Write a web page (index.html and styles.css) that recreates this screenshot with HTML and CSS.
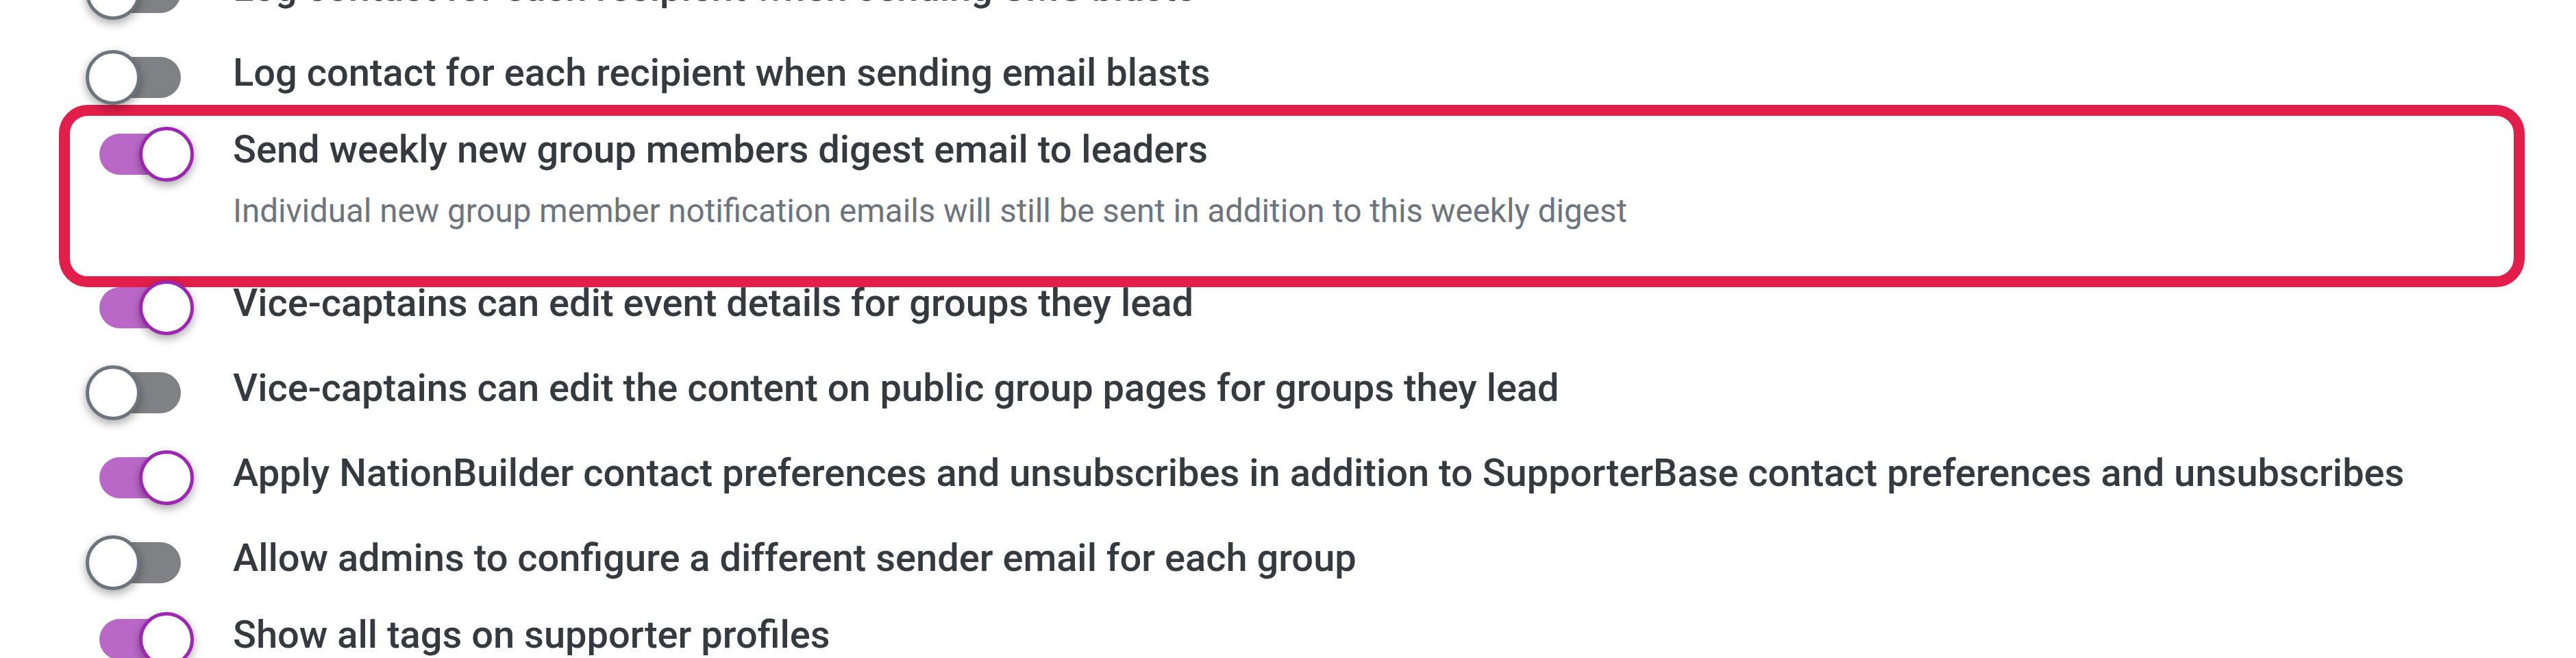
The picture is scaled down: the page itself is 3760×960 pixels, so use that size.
FILE: index.html
```html
<!DOCTYPE html>
<html lang="en">
<head>
  <meta charset="UTF-8"/>
  <meta name="viewport" content="width=device-width, initial-scale=1.0"/>
  <title>Group settings</title>
  <link rel="stylesheet" href="styles.css">
</head>
<body>

  <div class="settings">

    <div class="setting">
      <span class="switch"><span class="switch-track"></span><span class="switch-thumb"></span></span>
      <div class="setting-text">
        <div class="setting-label">Log contact for each recipient when sending SMS blasts</div>
      </div>
    </div>

    <div class="setting">
      <span class="switch"><span class="switch-track"></span><span class="switch-thumb"></span></span>
      <div class="setting-text">
        <div class="setting-label">Log contact for each recipient when sending email blasts</div>
      </div>
    </div>

    <div class="setting setting--tight setting--flagged">
      <span class="switch is-on"><span class="switch-track"></span><span class="switch-thumb"></span></span>
      <div class="setting-text">
        <div class="setting-label">Send weekly new group members digest email to leaders</div>
        <div class="setting-desc">Individual new group member notification emails will still be sent in addition to this weekly digest</div>
      </div>
    </div>

    <div class="setting">
      <span class="switch is-on"><span class="switch-track"></span><span class="switch-thumb"></span></span>
      <div class="setting-text">
        <div class="setting-label">Vice-captains can edit event details for groups they lead</div>
      </div>
    </div>

    <div class="setting">
      <span class="switch"><span class="switch-track"></span><span class="switch-thumb"></span></span>
      <div class="setting-text">
        <div class="setting-label">Vice-captains can edit the content on public group pages for groups they lead</div>
      </div>
    </div>

    <div class="setting">
      <span class="switch is-on"><span class="switch-track"></span><span class="switch-thumb"></span></span>
      <div class="setting-text">
        <div class="setting-label">Apply NationBuilder contact preferences and unsubscribes in addition to SupporterBase contact preferences and unsubscribes</div>
      </div>
    </div>

    <div class="setting">
      <span class="switch"><span class="switch-track"></span><span class="switch-thumb"></span></span>
      <div class="setting-text">
        <div class="setting-label">Allow admins to configure a different sender email for each group</div>
      </div>
    </div>

    <div class="setting setting--tight">
      <span class="switch is-on"><span class="switch-track"></span><span class="switch-thumb"></span></span>
      <div class="setting-text">
        <div class="setting-label">Show all tags on supporter profiles</div>
      </div>
    </div>

  </div>

</body>
</html>
```

FILE: styles.css
```css
* {
  box-sizing: border-box;
  margin: 0;
  padding: 0;
}

body {
  font-family: Roboto, 'Liberation Sans', sans-serif;
  background: #fff;
  color: #343a40;
  height: 100vh;
  overflow: hidden;
}

.settings {
  display: flex;
  flex-direction: column;
  gap: 44px;
  margin-top: -51px;
  padding: 0 75px 0 125px;
}

.setting {
  display: flex;
  align-items: flex-start;
  gap: 57px;
  position: relative;
}

.setting--tight {
  margin-top: -12px;
}

/* Red frame drawn around a highlighted setting */
.setting--flagged::before {
  content: "";
  position: absolute;
  top: -32px;
  bottom: -54px;
  left: -39px;
  right: 0;
  border: 16px solid #e21e4a;
  border-radius: 42px;
  z-index: 0;
}

.setting-text {
  position: relative;
  z-index: 1;
}

.setting-label {
  font-size: 56px;
  line-height: 67px;
  font-weight: 500;
  color: #343a40;
  white-space: nowrap;
}

.setting-desc {
  font-size: 47.5px;
  line-height: 56px;
  color: #6c757d;
  margin: 28px 0 29px;
  white-space: nowrap;
}

/* Toggle switch */
.switch {
  position: relative;
  flex: none;
  width: 158px;
  height: 80px;
  z-index: 1;
}

.switch-track {
  position: absolute;
  left: 20px;
  top: 10px;
  width: 119px;
  height: 60px;
  border-radius: 30px;
  background: #808184;
}

.switch-thumb {
  position: absolute;
  left: 0;
  top: 0;
  width: 80px;
  height: 80px;
  border-radius: 50%;
  background: #fff;
  border: 5px solid #6c757d;
  box-shadow: 0 5px 14px rgba(0, 0, 0, 0.35);
}

.switch.is-on .switch-track {
  background: #ba68c8;
}

.switch.is-on .switch-thumb {
  left: 78px;
  border-color: #9c27b0;
}
```
